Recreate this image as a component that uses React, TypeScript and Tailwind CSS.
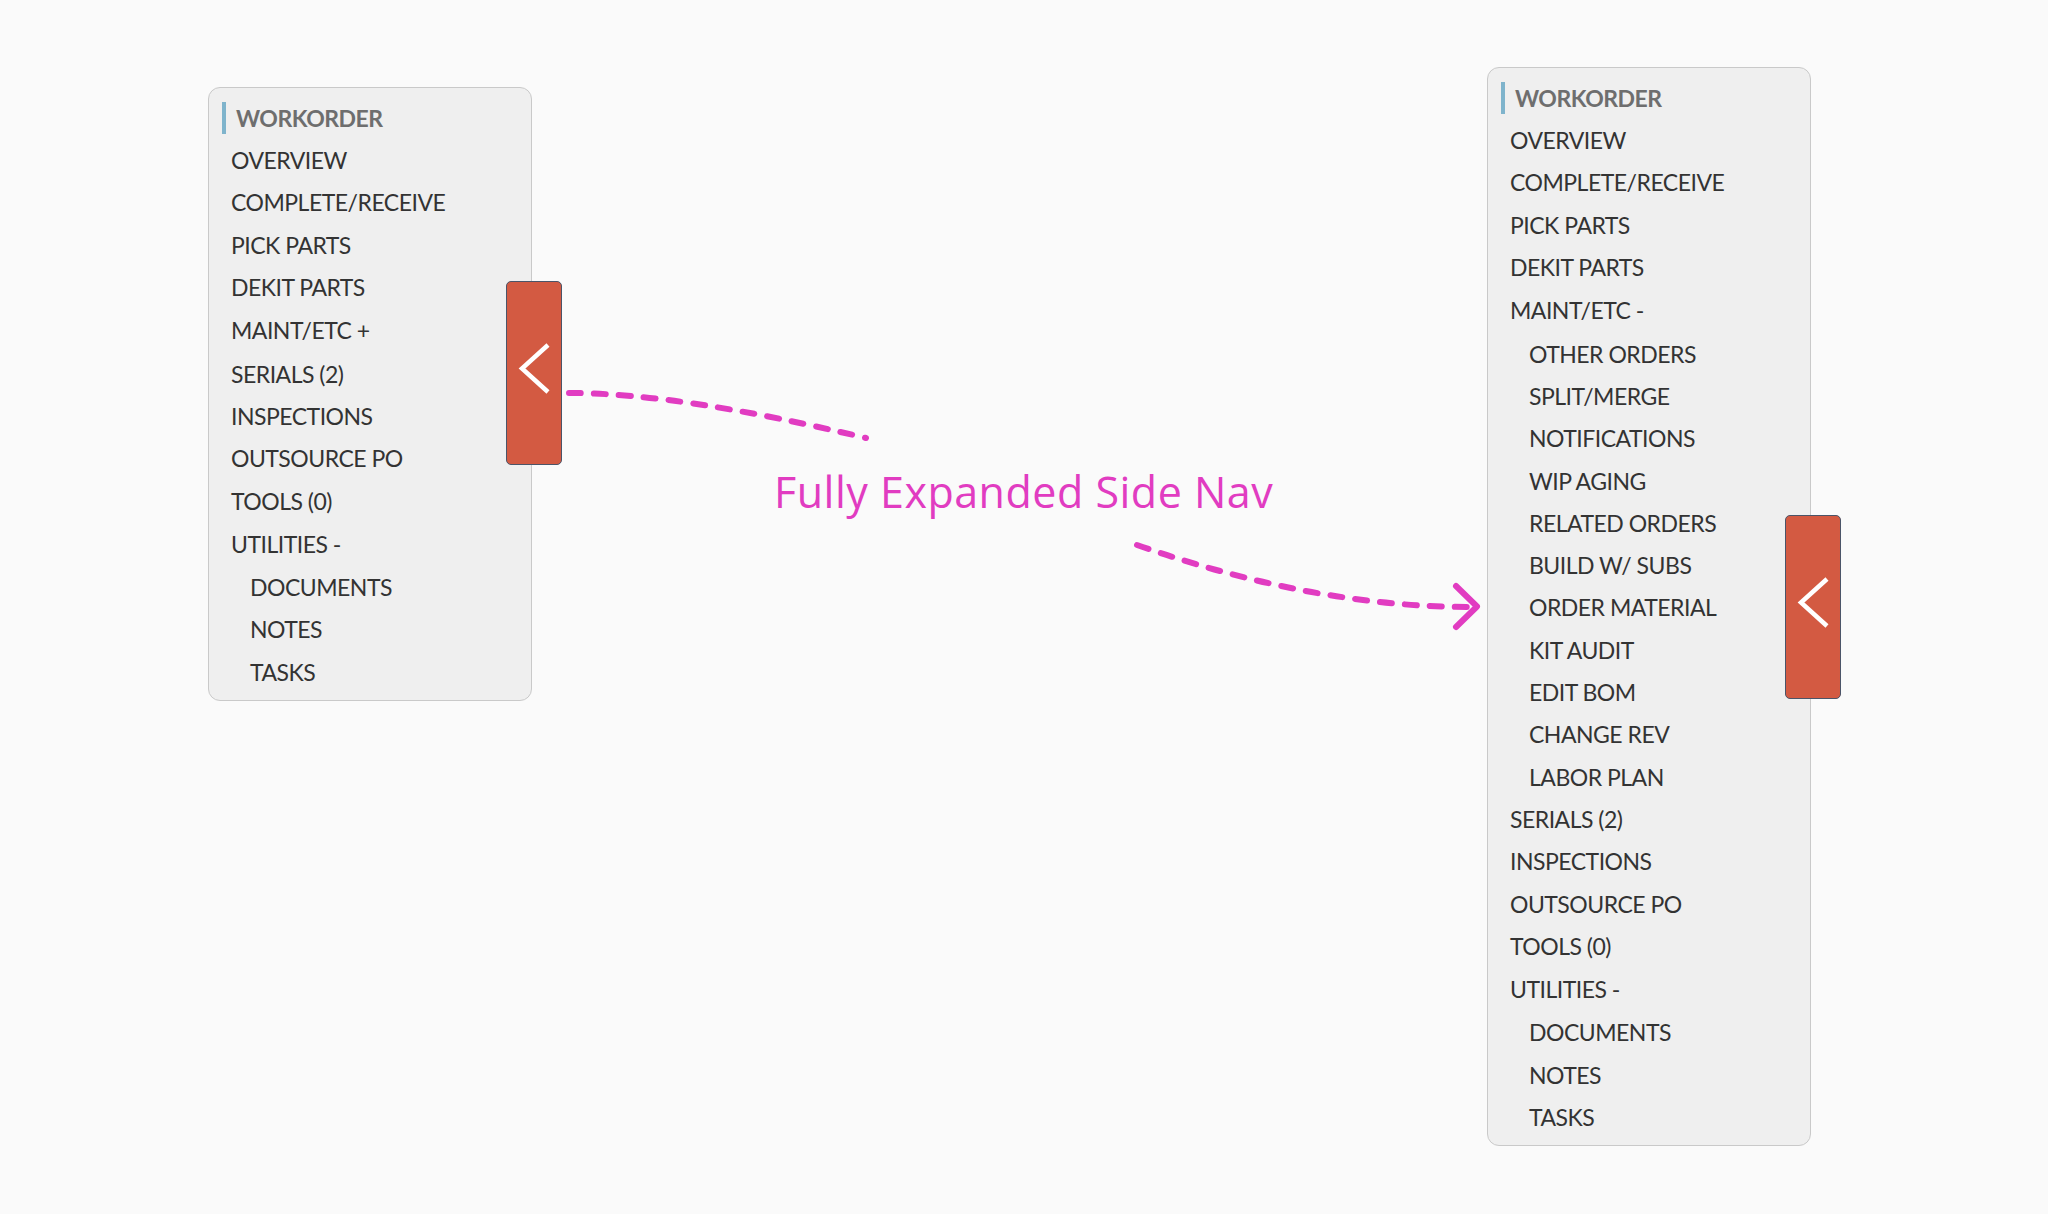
import React from 'react';

type NavItem = { label: string; sub?: boolean; group?: boolean };

const collapsedItems: NavItem[] = [
  { label: 'OVERVIEW' },
  { label: 'COMPLETE/RECEIVE' },
  { label: 'PICK PARTS' },
  { label: 'DEKIT PARTS' },
  { label: 'MAINT/ETC +', group: true },
  { label: 'SERIALS (2)' },
  { label: 'INSPECTIONS' },
  { label: 'OUTSOURCE PO' },
  { label: 'TOOLS (0)' },
  { label: 'UTILITIES -', group: true },
  { label: 'DOCUMENTS', sub: true },
  { label: 'NOTES', sub: true },
  { label: 'TASKS', sub: true },
];

const expandedItems: NavItem[] = [
  { label: 'OVERVIEW' },
  { label: 'COMPLETE/RECEIVE' },
  { label: 'PICK PARTS' },
  { label: 'DEKIT PARTS' },
  { label: 'MAINT/ETC -', group: true },
  { label: 'OTHER ORDERS', sub: true },
  { label: 'SPLIT/MERGE', sub: true },
  { label: 'NOTIFICATIONS', sub: true },
  { label: 'WIP AGING', sub: true },
  { label: 'RELATED ORDERS', sub: true },
  { label: 'BUILD W/ SUBS', sub: true },
  { label: 'ORDER MATERIAL', sub: true },
  { label: 'KIT AUDIT', sub: true },
  { label: 'EDIT BOM', sub: true },
  { label: 'CHANGE REV', sub: true },
  { label: 'LABOR PLAN', sub: true },
  { label: 'SERIALS (2)' },
  { label: 'INSPECTIONS' },
  { label: 'OUTSOURCE PO' },
  { label: 'TOOLS (0)' },
  { label: 'UTILITIES -', group: true },
  { label: 'DOCUMENTS', sub: true },
  { label: 'NOTES', sub: true },
  { label: 'TASKS', sub: true },
];

function ToggleButton({ top }: { top: string }) {
  return (
    <button
      className={`absolute left-[297px] ${top} w-[56px] h-[184px] bg-[#d35a42] border-[1.5px] border-[#4b5468] rounded-[5px]`}
    >
      <svg width="56" height="184" viewBox="0 0 56 184" className="absolute -left-[1.5px] -top-[1.5px]">
        <path d="M42 64 L16 87.5 L42 111" fill="none" stroke="#ffffff" strokeWidth="4.5" />
      </svg>
    </button>
  );
}

function SideNav({ items, className, buttonTop }: { items: NavItem[]; className: string; buttonTop: string }) {
  return (
    <div
      className={`relative w-[324px] bg-[#efefef] border border-[#c9c9c9] rounded-[12px] pt-[9px] pb-[7px] ${className}`}
      style={{ fontFamily: 'Lato, "Open Sans", sans-serif' }}
    >
      <div className="h-[42.3px] flex items-center pl-[13px]">
        <span className="w-[4px] h-[32px] bg-[#7fb4cc]" />
        <span className="ml-[10px] text-[23px] tracking-[-0.5px] font-bold text-[#6e6e6e]">WORKORDER</span>
      </div>
      {items.map((item, i) => (
        <div
          key={i}
          className={`flex items-center text-[23px] tracking-[-0.5px] text-[#333333] ${
            item.group ? 'h-[44.3px]' : 'h-[42.3px]'
          } ${item.sub ? 'pl-[41px]' : 'pl-[22px]'}`}
        >
          {item.label}
        </div>
      ))}
      <ToggleButton top={buttonTop} />
    </div>
  );
}

export default function App() {
  return (
    <div className="relative w-[2048px] h-[1214px] bg-[#fafafa] flex items-start overflow-hidden">
      <SideNav items={collapsedItems} className="ml-[208px] mt-[87px]" buttonTop="top-[193px]" />
      <SideNav items={expandedItems} className="ml-auto mr-[237px] mt-[67px]" buttonTop="top-[447px]" />

      <div
        className="absolute left-[774px] top-[470px] text-[43px] tracking-[0.5px] leading-none text-[#e13cc1] whitespace-nowrap"
        style={{ fontFamily: '"Open Sans", Lato, sans-serif' }}
      >
        Fully Expanded Side Nav
      </div>

      <svg className="absolute left-0 top-0 pointer-events-none" width="2048" height="1214">
        <path
          d="M569 393 Q679 393 866 438"
          fill="none"
          stroke="#e13cc1"
          strokeWidth="6"
          strokeLinecap="round"
          strokeDasharray="12 13"
        />
        <path
          d="M1137 545 Q1314 607 1470 607"
          fill="none"
          stroke="#e13cc1"
          strokeWidth="6"
          strokeLinecap="round"
          strokeDasharray="12 13"
        />
        <path
          d="M1456 586 L1477 606.5 L1456 627"
          fill="none"
          stroke="#e13cc1"
          strokeWidth="6"
          strokeLinecap="round"
          strokeLinejoin="round"
        />
      </svg>
    </div>
  );
}
